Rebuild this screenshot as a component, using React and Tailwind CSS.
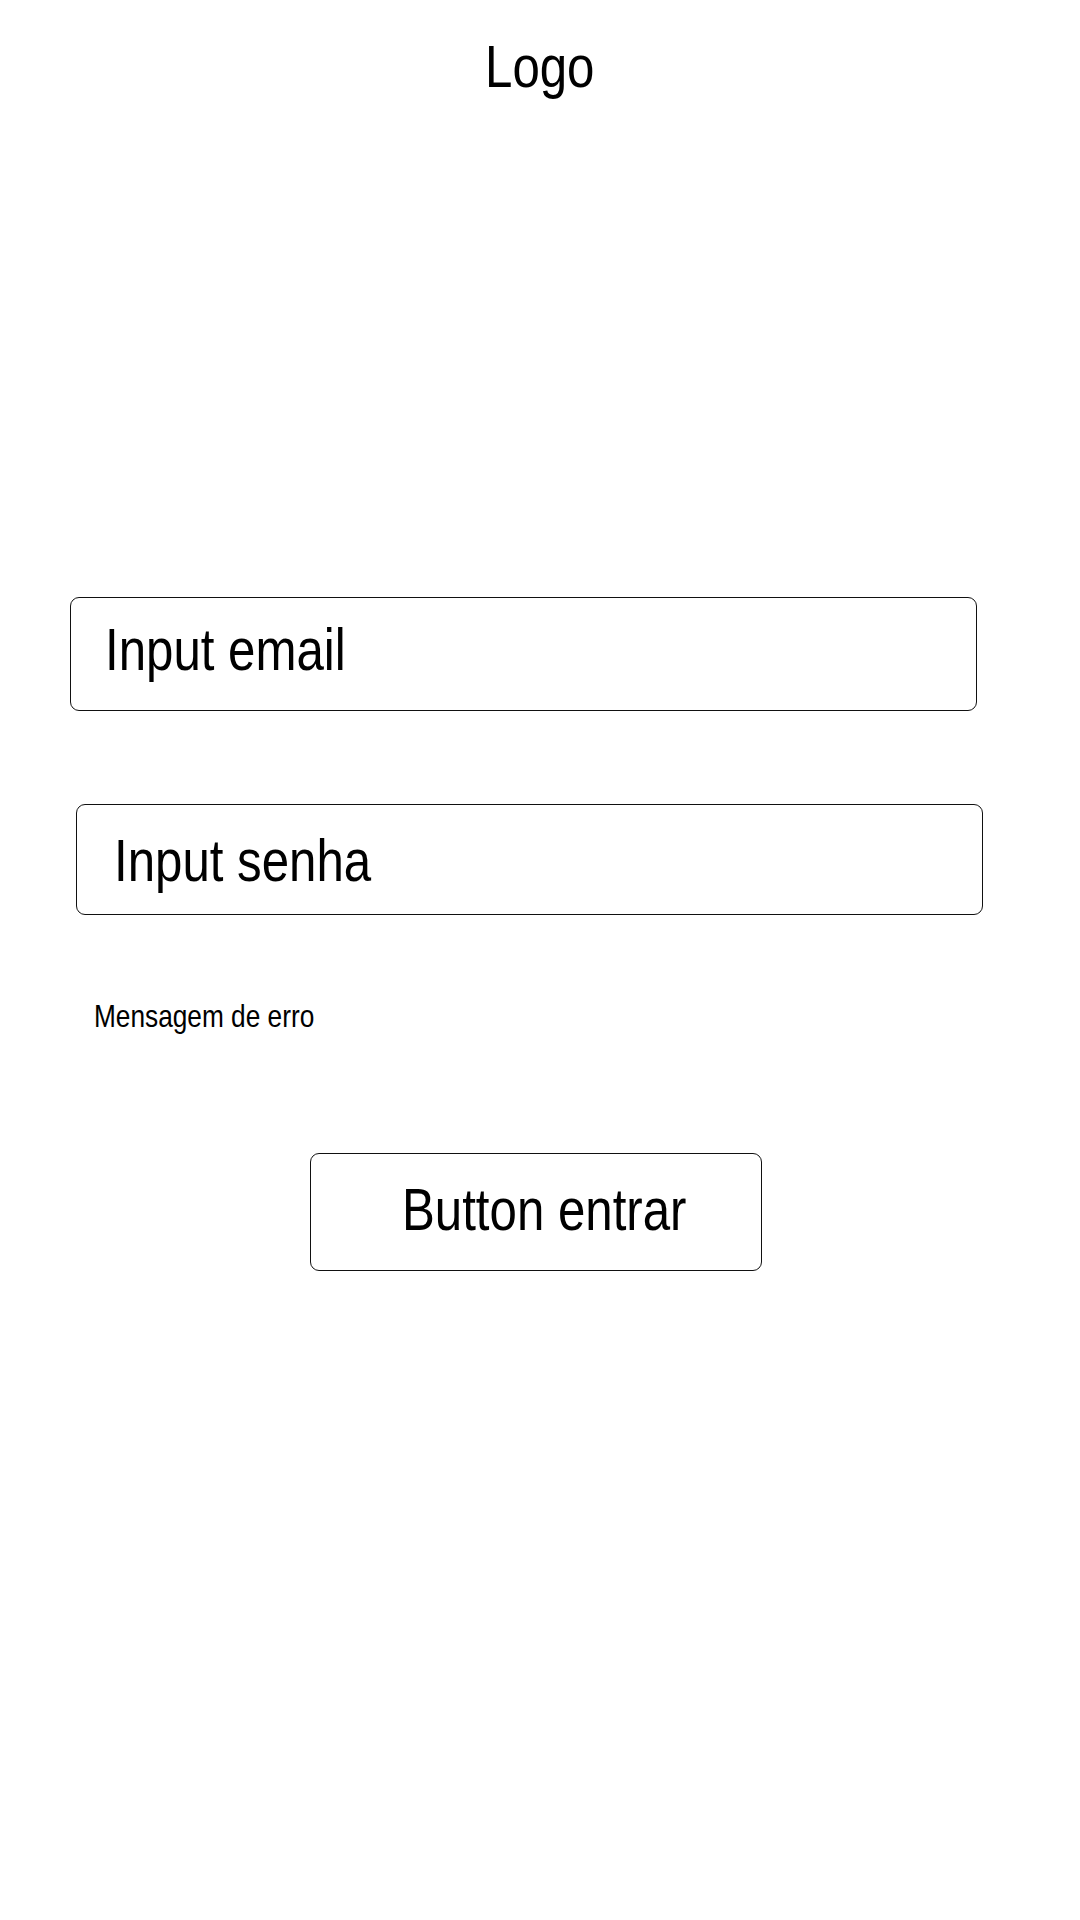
import React from 'react';

// Texto condensado: sem a Liberation Sans Narrow, comprime a Liberation Sans na horizontal
function Narrow({ children, center = false }) {
  return (
    <span className={`inline-block scale-x-[0.82] ${center ? 'origin-center' : 'origin-left'} whitespace-nowrap`}>
      {children}
    </span>
  );
}

function LoginPage() {
  return (
    <div className="w-[1080px] h-[1920px] bg-white text-black font-['Liberation_Sans',Arial,sans-serif]">
      {/* Logo */}
      <div className="pt-[37px] text-center text-[60px] leading-none">
        <Narrow center>Logo</Narrow>
      </div>

      {/* Input email */}
      <div className="ml-[70px] mt-[500px] w-[907px] h-[114px] border border-[#111] rounded-[9px] pl-[34px] pt-[22px] text-[60px] leading-none">
        <Narrow>Input email</Narrow>
      </div>

      {/* Input senha */}
      <div className="ml-[76px] mt-[93px] w-[907px] h-[111px] border border-[#111] rounded-[9px] pl-[37px] pt-[26px] text-[60px] leading-none">
        <Narrow>Input senha</Narrow>
      </div>

      {/* Mensagem de erro */}
      <div className="ml-[94px] mt-[85px] text-[32px] leading-none">
        <Narrow>Mensagem de erro</Narrow>
      </div>

      {/* Button entrar */}
      <div className="ml-[310px] mt-[121px] w-[452px] h-[118px] border border-[#111] rounded-[9px] pl-[91px] pt-[26px] text-[60px] leading-none">
        <Narrow>Button entrar</Narrow>
      </div>
    </div>
  );
}

export default function App() {
  return <LoginPage />;
}
